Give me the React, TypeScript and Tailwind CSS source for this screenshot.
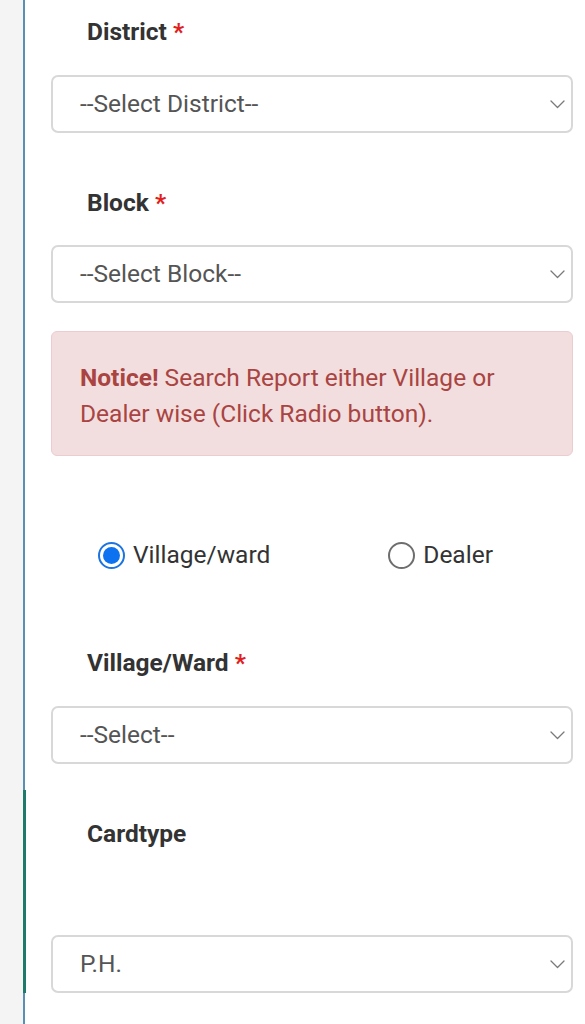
import React from 'react'

function Chevron() {
  return (
    <svg className="w-[15px] h-[9px]" viewBox="0 0 15 9" fill="none">
      <polyline points="1,1 7.5,7.5 14,1" stroke="#7a7a7a" strokeWidth={1.3} strokeLinecap="round" strokeLinejoin="round" />
    </svg>
  )
}

function SelectBox({ text, className = '' }: { text: string; className?: string }) {
  return (
    <div
      className={`h-[58px] rounded-[7px] border-2 border-[#d8d8d8] bg-white flex items-center justify-between pl-[27px] pr-[6px] ${className}`}
    >
      <span className="text-[24.5px] leading-[30px] text-[#555555]">{text}</span>
      <Chevron />
    </div>
  )
}

function Label({ text, required, className = '' }: { text: string; required?: boolean; className?: string }) {
  return (
    <div className={`pl-[36px] text-[24.5px] leading-[30px] font-bold text-[#333333] ${className}`}>
      {text}
      {required && <span className="text-[#e0201b]"> *</span>}
    </div>
  )
}

export default function App() {
  return (
    <div className="flex min-h-screen bg-white font-['Roboto',sans-serif]">
      {/* side strip */}
      <div className="w-[23px] flex-shrink-0 bg-[#f4f4f4]" />
      <div className="w-[3px] flex-shrink-0 flex flex-col">
        <div className="h-[790px] w-[2px] bg-[#5a8fb4]" />
        <div className="h-[203px] w-[3px] bg-[#1e7a6a]" />
        <div className="flex-1 w-[2px] bg-[#5a8fb4]" />
      </div>

      <div className="flex-1 pl-[25px] pr-[12px] pb-[40px]">
        <Label text="District" required className="pt-[17px]" />
        <SelectBox text="--Select District--" className="mt-[28px]" />

        <Label text="Block" required className="mt-[55px]" />
        <SelectBox text="--Select Block--" className="mt-[27px]" />

        {/* notice */}
        <div className="mt-[28px] rounded-[6px] border border-[#ebccd1] bg-[#f2dede] px-[28px] pt-[28px] pb-[23px] text-[24.5px] leading-[36px] text-[#a94442]">
          <b className="font-bold">Notice!</b> Search Report either Village or Dealer wise (Click Radio button).
        </div>

        {/* radios */}
        <div className="mt-[84px] h-[30px] flex items-center">
          <div className="ml-[47px] flex items-center gap-[8px]">
            <div className="w-[27px] h-[27px] rounded-full border-2 border-[#1c74e0] flex items-center justify-center">
              <div className="w-[17px] h-[17px] rounded-full bg-[#0d72f0]" />
            </div>
            <span className="text-[24.5px] leading-[30px] text-[#333333]">Village/ward</span>
          </div>
          <div className="ml-[118px] flex items-center gap-[8px]">
            <div className="w-[27px] h-[27px] rounded-full border-2 border-[#6e6e6e]" />
            <span className="text-[24.5px] leading-[30px] text-[#333333]">Dealer</span>
          </div>
        </div>

        <Label text="Village/Ward" required className="mt-[78px]" />
        <SelectBox text="--Select--" className="mt-[28px]" />

        <Label text="Cardtype" className="mt-[55px]" />
        <SelectBox text="P.H." className="mt-[86px]" />
      </div>
    </div>
  )
}
